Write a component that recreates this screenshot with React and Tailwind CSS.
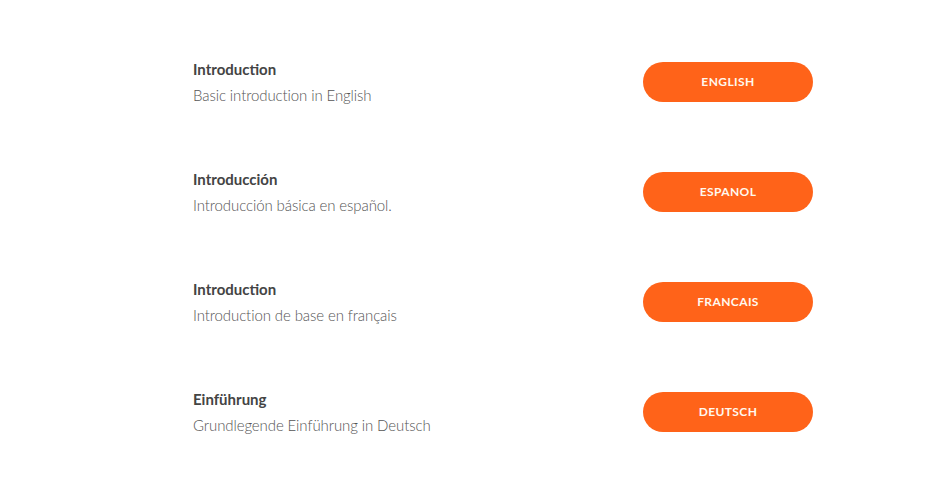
export default function App() {
  const rows = [
    { t: "Introduction", s: "Basic introduction in English", b: "ENGLISH" },
    { t: "Introducción", s: "Introducción básica en español.", b: "ESPANOL" },
    { t: "Introduction", s: "Introduction de base en français", b: "FRANCAIS" },
    { t: "Einführung", s: "Grundlegende Einführung in Deutsch", b: "DEUTSCH" },
  ];
  return (
    <div className="w-[932px] h-[492px] bg-white pl-[193px] pr-[119px] pt-[27px] font-['Lato',sans-serif]">
      <div className="flex flex-col">
        {rows.map((r, i) => (
          <div key={i} className="h-[110px] flex items-center justify-between">
            <div className="flex flex-col">
              <div className="text-[15px] leading-[20px] font-bold text-[#444444]">{r.t}</div>
              <div className="mt-[6px] text-[15px] leading-[20px] font-light text-[#555555] tracking-[-0.1px]">{r.s}</div>
            </div>
            <button className="w-[170px] h-[40px] rounded-full bg-[#ff6319] text-[#fff8ee] text-[12px] font-bold tracking-[0.4px]">
              {r.b}
            </button>
          </div>
        ))}
      </div>
    </div>
  );
}
